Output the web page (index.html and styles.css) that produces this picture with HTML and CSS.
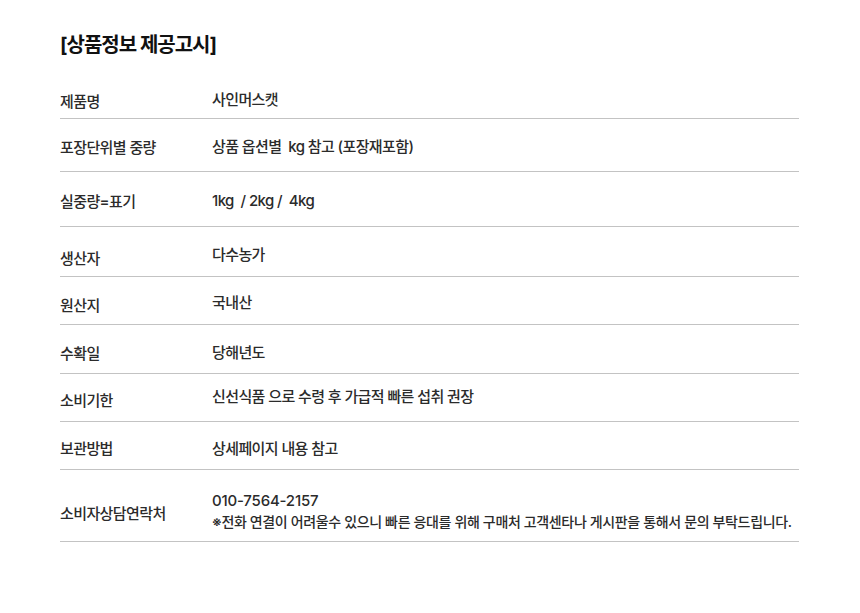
FILE: index.html
```html
<!DOCTYPE html>
<html lang="ko">
<head>
<meta charset="utf-8">
<title>상품정보 제공고시</title>
<link rel="stylesheet" href="styles.css">
</head>
<body>
<div class="page">
  <h2 class="title">[상품정보 제공고시]</h2>
  <div class="table">
    <div class="row r1"><div class="label">제품명</div><div class="value">사인머스캣</div></div>
    <div class="row r2"><div class="label">포장단위별 중량</div><div class="value">상품 옵션별&nbsp; kg 참고 (포장재포함)</div></div>
    <div class="row r3"><div class="label">실중량=표기</div><div class="value">1kg &nbsp;/ 2kg / &nbsp;4kg</div></div>
    <div class="row r4"><div class="label">생산자</div><div class="value">다수농가</div></div>
    <div class="row r5"><div class="label">원산지</div><div class="value">국내산</div></div>
    <div class="row r6"><div class="label">수확일</div><div class="value">당해년도</div></div>
    <div class="row r7"><div class="label">소비기한</div><div class="value">신선식품 으로 수령 후 가급적 빠른 섭취 권장</div></div>
    <div class="row r8"><div class="label">보관방법</div><div class="value">상세페이지 내용 참고</div></div>
    <div class="row r9"><div class="label">소비자상담연락처</div><div class="value"><div class="phone">010-7564-2157</div><div class="note">※전화 연결이 어려울수 있으니 빠른 응대를 위해 구매처 고객센타나 게시판을 통해서 문의 부탁드립니다.</div></div></div>
  </div>
</div>
</body>
</html>
```
FILE: styles.css
```css
* { box-sizing: content-box; }
html, body { margin: 0; padding: 0; background: #fff; }
body {
  font-family: Inter, "Noto Sans CJK KR", "Noto Sans", sans-serif;
  color: #2b2b2b;
}
.page {
  width: 739px;
  margin-left: 60px;
}
.title {
  margin: 31px 0 0;
  font-size: 20px;
  line-height: 28px;
  font-weight: 700;
  letter-spacing: -1px;
  color: #111;
}
.row {
  display: grid;
  grid-template-columns: 152px 1fr;
  align-items: start;
  height: var(--h);
  border-bottom: 1px solid #c3c3c3;
  font-size: 15px;
  line-height: 20px;
  font-weight: 500;
  letter-spacing: -0.6px;
}
.label { padding-top: var(--l); }
.value { padding-top: var(--v); }
.phone { line-height: 22px; letter-spacing: -0.2px; font-size: 15px; }
.note { font-size: 14px; letter-spacing: -0.36px; }
.r1 { --h: 59px; --l: 33px; --v: 31px; }
.r2 { --h: 52px; --l: 19px; --v: 18px; }
.r3 { --h: 54px; --l: 20px; --v: 19px; }
.r4 { --h: 49px; --l: 22px; --v: 18px; }
.r5 { --h: 47px; --l: 19px; --v: 16px; }
.r6 { --h: 48px; --l: 19px; --v: 18px; }
.r7 { --h: 47px; --l: 17px; --v: 13px; }
.r8 { --h: 47px; --l: 17px; --v: 17px; }
.r9 { --h: 71px; --l: 34px; --v: 20px; }
```
